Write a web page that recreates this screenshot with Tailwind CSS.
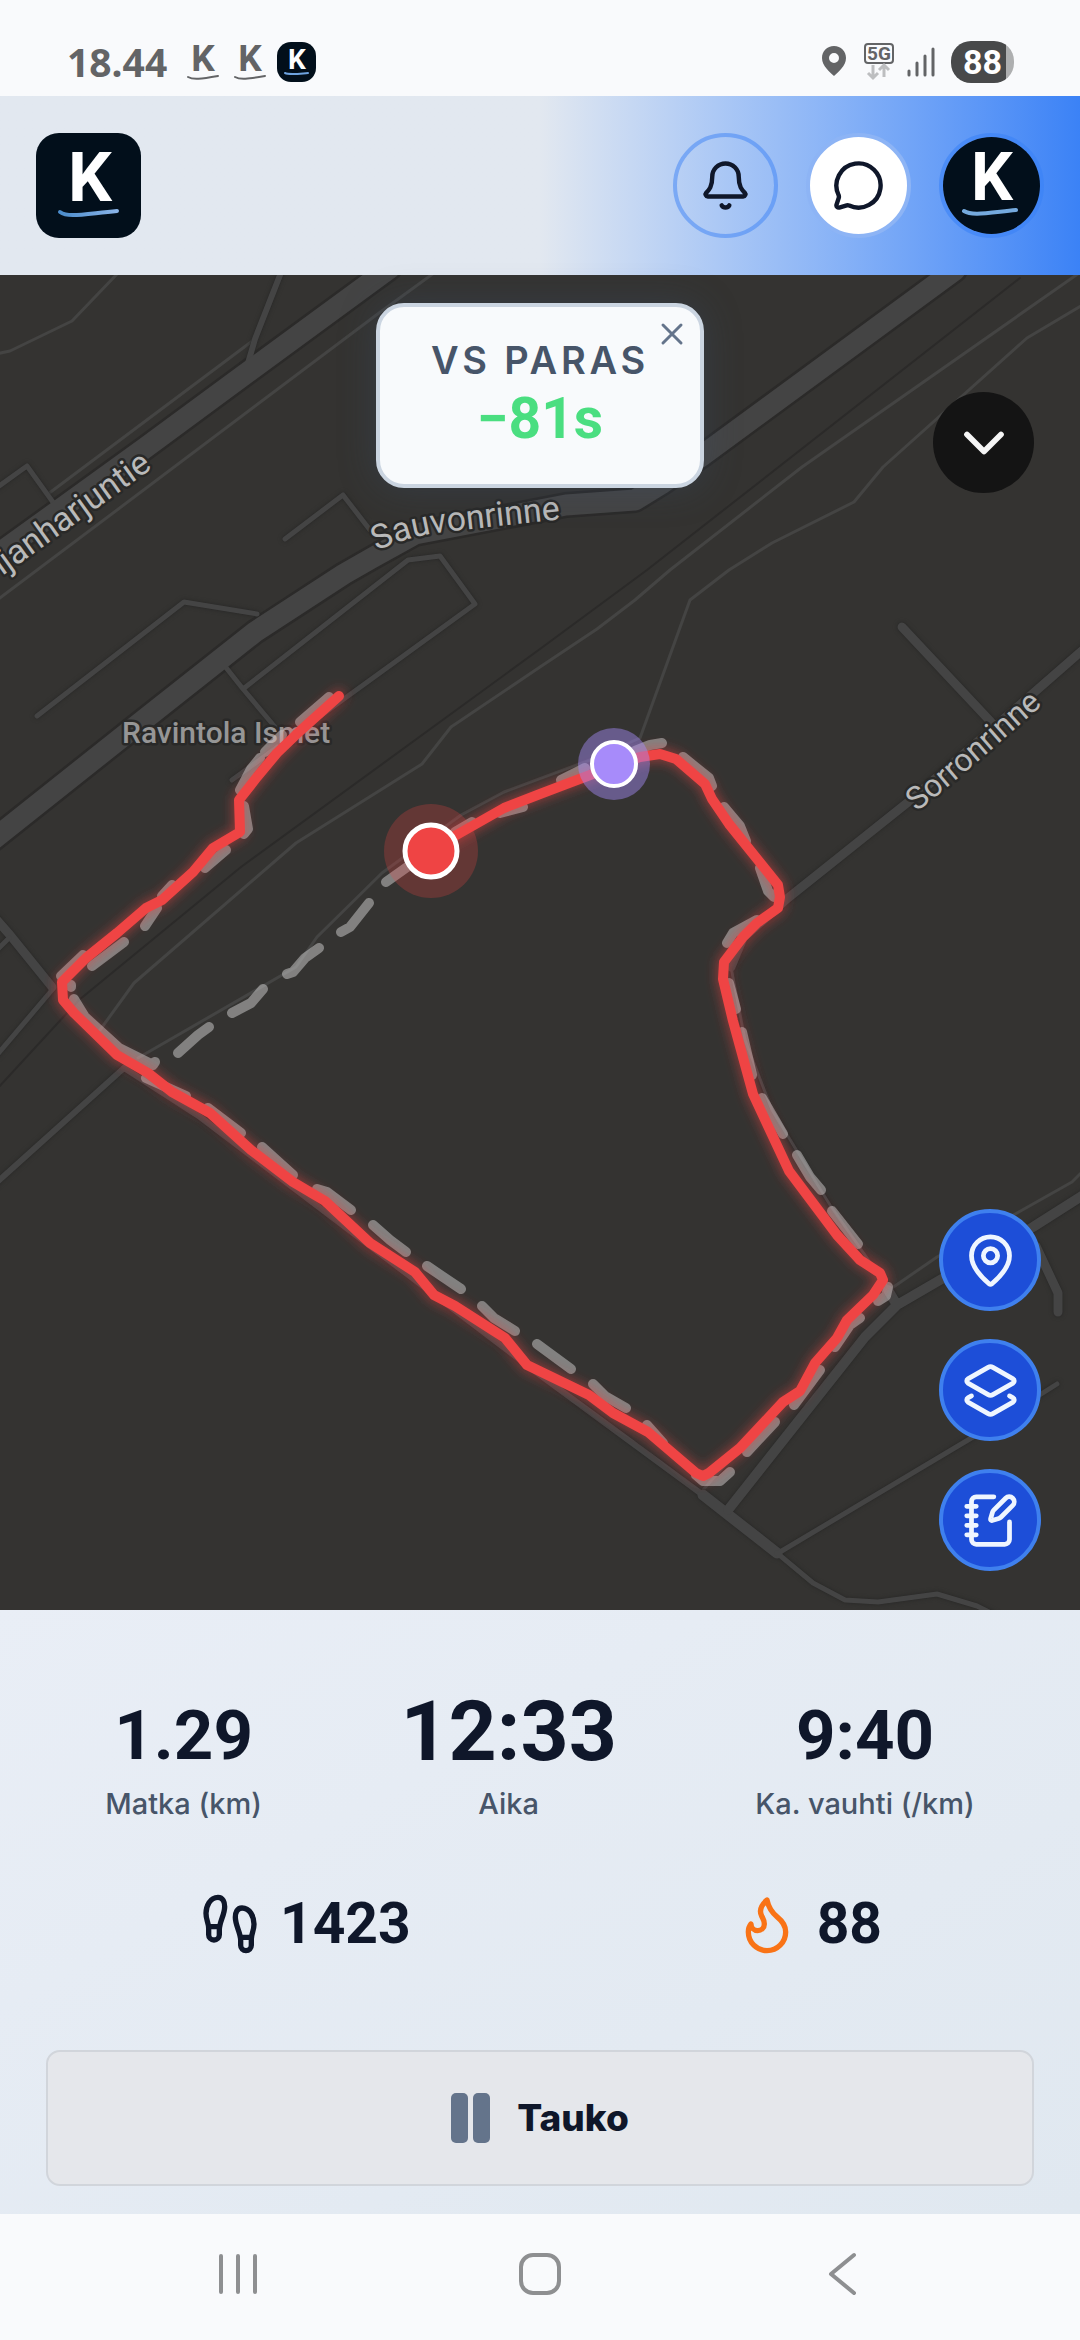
<!DOCTYPE html>
<html lang="fi">
<head>
    <meta charset="UTF-8">
    <meta name="viewport" content="width=device-width, initial-scale=1.0">
    <title>Kävely</title>
    <script src="https://cdn.jsdelivr.net/npm/@tailwindcss/browser@4"></script>
</head>
<body class="flex min-h-screen flex-col bg-[#f9fafc] font-['Inter',sans-serif] text-[#0f172a]">
    <!-- Status bar -->
    <div class="flex h-24 items-end justify-between pb-[13px] pr-[66px] pl-[67px] text-[#636466]">
        <div class="flex items-center">
            <span class="font-['Noto_Sans',sans-serif] text-[39px] leading-[42px] font-bold">18.44</span>
            <svg class="ml-5 h-[42px] w-8 overflow-visible" viewBox="0 0 32 42" aria-hidden="true">
                <text x="16" y="30" text-anchor="middle" font-family="Roboto, sans-serif" font-weight="700" font-size="37" fill="currentColor">K</text>
                <path d="M1 36C6 39 14 38 31 35" fill="none" stroke="currentColor" stroke-width="2" stroke-linecap="round"/>
            </svg>
            <svg class="ml-[15px] h-[42px] w-8 overflow-visible" viewBox="0 0 32 42" aria-hidden="true">
                <text x="16" y="30" text-anchor="middle" font-family="Roboto, sans-serif" font-weight="700" font-size="37" fill="currentColor">K</text>
                <path d="M1 36C6 39 14 38 31 35" fill="none" stroke="currentColor" stroke-width="2" stroke-linecap="round"/>
            </svg>
            <svg class="ml-[11px] size-10" viewBox="0 0 40 40" aria-hidden="true">
                <rect width="39" height="40" rx="14" fill="#020f1b"/>
                <text x="20" y="27" text-anchor="middle" font-family="Roboto, sans-serif" font-weight="700" font-size="28" fill="#fff">K</text>
                <path d="M8 31C12 33 19 32 31 31" fill="none" stroke="#6ea3e0" stroke-width="2" stroke-linecap="round"/>
            </svg>
        </div>
        <div class="flex items-center">
            <svg class="h-[42px] w-[26px]" viewBox="0 0 26 42" aria-hidden="true">
                <path fill="currentColor" fill-rule="evenodd" d="M13 5C6 5 1 10 1 17C1 25 9 31 13 35C17 31 25 25 25 17C25 10 20 5 13 5ZM13 12a5 5 0 1 1 0 10a5 5 0 0 1 0-10Z"/>
            </svg>
            <svg class="ml-4 h-[42px] w-8" viewBox="0 0 32 42" aria-hidden="true">
                <rect x="2" y="3" width="28" height="19" rx="3" fill="none" stroke="currentColor" stroke-width="2"/>
                <text x="16" y="19" text-anchor="middle" font-family="Roboto, sans-serif" font-weight="700" font-size="19" fill="currentColor">5G</text>
                <path d="M10 24v12M5 32l5 5 5-5M21 36V25M16 29l5-5 5 5" fill="none" stroke="#bdbec0" stroke-width="3"/>
            </svg>
            <svg class="ml-3 h-[42px] w-7" viewBox="0 0 28 42" aria-hidden="true">
                <path d="M2 30v4M10 22v12M18 15v19M26 8v26" stroke="currentColor" stroke-width="3" stroke-linecap="round"/>
            </svg>
            <span class="ml-4 flex h-[42px] w-[63px] items-center justify-center overflow-hidden rounded-[20px] bg-linear-to-r from-[#48494a] from-87% to-[#aeafb0] to-87% font-['Roboto',sans-serif] text-[34px] font-bold text-white">88</span>
        </div>
    </div>

    <!-- App header -->
    <header class="flex items-center justify-between bg-linear-to-r from-[#e2e8f0] from-50% to-[#3b82f6] px-9 py-[37px]">
        <a href="#" aria-label="Etusivu" class="block">
            <svg class="size-[105px]" viewBox="0 0 105 105">
                <defs>
                    <linearGradient id="swoosh"><stop stop-color="#4b8ccb"/><stop offset="1" stop-color="#8ab4e8"/></linearGradient>
                </defs>
                <rect width="105" height="105" rx="23" fill="#020f1b"/>
                <text x="54" y="68" text-anchor="middle" font-family="Roboto, sans-serif" font-weight="700" font-size="69" fill="#fff">K</text>
                <path d="M24 79C32 85 48 81 81 78" fill="none" stroke="url(#swoosh)" stroke-width="4" stroke-linecap="round"/>
            </svg>
        </a>
        <div class="flex gap-7">
            <button aria-label="Ilmoitukset" class="flex size-[105px] items-center justify-center rounded-full border-4 border-[#3b82f6]/50">
                <svg class="size-[53px]" viewBox="0 0 24 24" fill="none" stroke="currentColor" stroke-width="2" stroke-linecap="round" stroke-linejoin="round">
                    <path d="M10.268 21a2 2 0 0 0 3.464 0"/>
                    <path d="M3.262 15.326A1 1 0 0 0 4 17h16a1 1 0 0 0 .74-1.673C19.41 13.956 18 12.499 18 8A6 6 0 0 0 6 8c0 4.499-1.411 5.956-2.738 7.326"/>
                </svg>
            </button>
            <button aria-label="Viestit" class="flex size-[105px] items-center justify-center rounded-full border-4 border-[#8db4f5] bg-white">
                <svg class="size-[53px]" viewBox="0 0 24 24" fill="none" stroke="currentColor" stroke-width="2" stroke-linecap="round" stroke-linejoin="round">
                    <path d="M2.992 16.342a2 2 0 0 1 .094 1.167l-1.065 3.29a1 1 0 0 0 1.236 1.168l3.413-.998a2 2 0 0 1 1.099.092 10 10 0 1 0-4.777-4.719"/>
                </svg>
            </button>
            <button aria-label="Profiili" class="size-[105px] overflow-hidden rounded-full border-4 border-[#3b82f6]/60">
                <svg class="size-full" viewBox="0 0 97 97">
                    <rect width="97" height="97" fill="#020f1b"/>
                    <text x="49" y="63" text-anchor="middle" font-family="Roboto, sans-serif" font-weight="700" font-size="66" fill="#fff">K</text>
                    <path d="M21 74C29 79 43 76 73 73" fill="none" stroke="#75aade" stroke-width="4" stroke-linecap="round"/>
                </svg>
            </button>
        </div>
    </header>

    <!-- Map -->
    <main class="relative bg-[#343331]">
        <svg class="block w-full" viewBox="0 275 1080 1335" fill="none" stroke-linecap="round" stroke-linejoin="round" role="img" aria-label="Reittikartta">
            <defs>
                <filter id="glow" x="-10%" y="-10%" width="120%" height="120%"><feGaussianBlur stdDeviation="6"/></filter>
                <path id="track" d="M339 696L300 731L277 753L257 777L239 800L240 832L213 848L193 872L162 900L146 908L117 933L86 958L62 982L63 1000L74 1013L117 1055L148 1073L172 1092L210 1113L251 1150L293 1182L325 1201L370 1243L415 1272L434 1295L455 1306L505 1338L527 1365L589 1395L613 1413L648 1432L696 1473L703 1476L709 1473L740 1448L783 1402L800 1391L815 1363L837 1338L847 1320L873 1295L883 1280L880 1273L860 1260L837 1235L789 1171L753 1094L733 1021L723 979L724 962L743 937L757 923L778 908L780 897L778 885L729 824L712 799L705 784L676 759L660 754L640 757L614 766L561 786L540 794L504 808L430 850"/>
                <g id="lanes">
                    <path d="M282 270L255 339L244 377" stroke-width="6"/>
                    <path d="M-5 489L27 466L60 512M285 539L343 495L370 530" stroke-width="5"/>
                    <path d="M37 716L184 602L257 614M243 689L408 560L440 556L475 604L232 780M220 660L243 689L275 727" stroke-width="5"/>
                    <path d="M-5 918L10 935L52 987" stroke-width="9"/>
                    <path d="M52 990L-3 1055M9 938L-3 950" stroke-width="5"/>
                    <path d="M124 1068L-5 1184" stroke-width="6"/>
                    <path d="M124 1068L200 1117L544 1378L703 1495" stroke-width="6"/>
                    <path d="M703 1495L777 1553" stroke-width="11"/>
                    <path d="M777 1553L813 1583L845 1600L878 1602L937 1594L977 1606L995 1615M780 1552L973 1437L1057 1384" stroke-width="5"/>
                    <path d="M728 1510L865 1337L897 1305L940 1280L1033 1227L1085 1194M897 1305L888 1290" stroke-width="10"/>
                    <path d="M1036 1246L1058 1293V1312" stroke-width="9"/>
                    <path d="M1085 648L912 799L788 898L743 938L731 967" stroke-width="9"/>
                    <path d="M731 967L745 1040L772 1110L830 1205L888 1288" stroke-width="3"/>
                    <path d="M902 627L991 722" stroke-width="9"/>
                </g>
            </defs>
            <!-- footpaths -->
            <g stroke="#444443" stroke-width="3">
                <path d="M118 273L72 321L10 351L-4 354M255 339L48 494M434 273L379 313L-4 601"/>
                <path d="M1082 271L802 467L670 570L635 600L597 629L540 667L451 727L422 764L296 843L134 983L100 1030"/>
                <path d="M1084 304L1027 338L883 467L854 502L772 543L729 570L690 600L640 738L590 760L504 792L461 815L382 873L317 937L296 967L138 1058"/>
                <path d="M703 1490L725 1465M892 1288L937 1257L1017 1213L1072 1182L1084 1170"/>
            </g>
            <path d="M1020 278L647 570L540 649L241 867L79 1000L-2 1088" stroke="#2b2a29" stroke-width="2"/>
            <!-- roads: dark casing first, then fill -->
            <g stroke="#2b2a29" stroke-width="26">
                <path d="M390 268L244 375L145 448L-10 560"/>
                <path d="M-10 842L131 730L217 662L255 632L344 574L372 558L415 534L566 505L635 500L661 484L703 455L955 270"/>
            </g>
            <g stroke="#2b2a29">
                <use href="#lanes" style="filter:drop-shadow(0 0 2px #262625)"/>
            </g>
            <g stroke="#444444"><use href="#lanes"/></g>
            <g stroke="#444444" stroke-width="21">
                <path d="M390 268L244 375L145 448L-10 560"/>
                <path d="M-10 842L131 730L217 662L255 632L344 574L372 558L415 534L566 505L635 500L661 484L703 455L955 270"/>
            </g>
            <!-- place names -->
            <path id="name1" d="M-48 612L153 468"/>
            <path id="name2" d="M377 551Q405 537 443 532L590 516"/>
            <path id="name3" d="M917 812Q985 757 1062 687"/>
            <g font-family="Roboto, sans-serif" fill="#b9b9b9" stroke="#292928" stroke-width="5" paint-order="stroke">
                <text font-size="34"><textPath href="#name1" startOffset="100%" text-anchor="end">ijanharjuntie</textPath></text>
                <text font-size="34"><textPath href="#name2">Sauvonrinne</textPath></text>
                <text font-size="32"><textPath href="#name3">Sorronrinne</textPath></text>
                <text x="122" y="743" font-size="30" font-weight="500" fill="#969696">Ravintola Ismet</text>
            </g>
            <!-- best run, dashed -->
            <path stroke="#d0d0d0" stroke-opacity=".5" stroke-width="10" d="M329 697L300 722M282 735L265 752M260 758L251 769L240 790M244 806L248 829L244 834M226 850L205 868M172 885L162 896M157 908L145 926M124 942L92 966M83 955L61 976M71 985V987M74 999L85 1017L119 1048M119 1048L153 1065L155 1062M146 1078L186 1096M208 1108L241 1133M262 1147L293 1175M317 1189L327 1192L351 1210M373 1225L390 1240L406 1252M427 1266L461 1289M482 1306L494 1318L515 1331M537 1344L571 1369M593 1384L605 1396L626 1408M647 1425L663 1443M696 1475L703 1481H720L730 1472M747 1452L775 1422M794 1405L820 1370M835 1347L850 1325L860 1318M878 1301L886 1296L888 1287M858 1244L832 1211M821 1190L810 1177L797 1155M783 1134L762 1098M752 1075L742 1032M736 1009L729 983M727 943L733 933L757 920M774 897L768 891L760 868M746 841L740 826L724 807M712 786L709 778L683 757M662 743L650 745L635 751M585 768L561 780M523 807L500 813M472 822L455 832M410 865L386 882M369 903L350 927L341 932M319 948L305 958L293 972L287 974M263 989L251 1003L232 1013M209 1027L198 1035L178 1053"/>
            <use href="#track" stroke="#ef4444" stroke-opacity=".5" stroke-width="13" filter="url(#glow)"/>
            <use href="#track" stroke="#ef4444" stroke-width="10"/>
            <circle cx="614" cy="764" r="36" fill="#a78bfa" fill-opacity=".45"/>
            <circle cx="614" cy="764" r="22" fill="#a78bfa" stroke="#fff" stroke-width="4"/>
            <circle cx="431" cy="851" r="47" fill="#ef4444" fill-opacity=".25"/>
            <circle cx="431" cy="851" r="26" fill="#ef4444" stroke="#fff" stroke-width="5"/>
        </svg>

        <div class="absolute inset-x-0 top-7 mx-auto w-[328px] rounded-[28px] border-4 border-[#cbd5e1] bg-[#f8fafc] pt-[29px] pb-[32px] text-center shadow-[0_0_36px_rgba(59,80,110,0.35)]">
            <p class="text-[38px] leading-[48px] font-semibold tracking-widest text-[#475569]">VS PARAS</p>
            <p class="mt-[2px] font-['Roboto',sans-serif] text-[57px] leading-[66px] font-bold text-[#4ade80]">−81s</p>
            <button aria-label="Sulje" class="absolute top-[9px] right-[10px] text-[#64748b]">
                <svg class="size-9" viewBox="0 0 24 24" fill="none" stroke="currentColor" stroke-width="2" stroke-linecap="round"><path d="M18 6L6 18M6 6l12 12"/></svg>
            </button>
        </div>

        <button aria-label="Pienennä kartta" class="absolute top-[117px] right-[46px] flex size-[101px] items-center justify-center rounded-full bg-[#141414] text-[#f5f5f5]">
            <svg class="size-[68px]" viewBox="0 0 24 24" fill="none" stroke="currentColor" stroke-width="2" stroke-linecap="round" stroke-linejoin="round"><path d="m6 9 6 6 6-6"/></svg>
        </button>

        <div class="absolute right-[39px] bottom-[39px] flex flex-col gap-7 text-[#eff6ff]">
            <button aria-label="Sijainti" class="flex size-[102px] items-center justify-center rounded-full border-4 border-[#3f80ee] bg-[#1d4ed8]">
                <svg class="size-[57px]" viewBox="0 0 24 24" fill="none" stroke="currentColor" stroke-width="2" stroke-linecap="round" stroke-linejoin="round">
                    <path d="M20 10c0 4.993-5.539 10.193-7.399 11.799a1 1 0 0 1-1.202 0C9.539 20.193 4 14.993 4 10a8 8 0 0 1 16 0"/>
                    <circle cx="12" cy="10" r="3"/>
                </svg>
            </button>
            <button aria-label="Karttatasot" class="flex size-[102px] items-center justify-center rounded-full border-4 border-[#3f80ee] bg-[#1d4ed8]">
                <svg class="size-[57px]" viewBox="0 0 24 24" fill="none" stroke="currentColor" stroke-width="2" stroke-linecap="round" stroke-linejoin="round">
                    <path d="M13 13.74a2 2 0 0 1-2 0L2.5 8.87a1 1 0 0 1 0-1.74L11 2.26a2 2 0 0 1 2 0l8.5 4.87a1 1 0 0 1 0 1.74z"/>
                    <path d="m20 14.285 1.5.845a1 1 0 0 1 0 1.74L13 21.74a2 2 0 0 1-2 0l-8.5-4.87a1 1 0 0 1 0-1.74l1.5-.845"/>
                </svg>
            </button>
            <button aria-label="Muistiinpano" class="flex size-[102px] items-center justify-center rounded-full border-4 border-[#3f80ee] bg-[#1d4ed8]">
                <svg class="size-[57px]" viewBox="0 0 24 24" fill="none" stroke="currentColor" stroke-width="2" stroke-linecap="round" stroke-linejoin="round">
                    <path d="M13.4 2H6a2 2 0 0 0-2 2v16a2 2 0 0 0 2 2h12a2 2 0 0 0 2-2v-7.4"/>
                    <path d="M2 6h4M2 10h4M2 14h4M2 18h4"/>
                    <path d="M21.378 5.626a1 1 0 1 0-3.004-3.004l-5.01 5.012a2 2 0 0 0-.506.854l-.837 2.87a.5.5 0 0 0 .62.62l2.87-.837a2 2 0 0 0 .854-.506z"/>
                </svg>
            </button>
        </div>
    </main>

    <!-- Stats -->
    <section class="bg-linear-to-br from-[#e9eef6] to-[#e0e8f0] px-9 pt-20 pb-7">
        <div class="flex items-end justify-around text-center">
            <div>
                <p class="font-['Roboto',sans-serif] text-[69px] leading-[76px] font-bold">1.29</p>
                <p class="mt-[10px] text-[29px] leading-10 font-medium text-[#475569]">Matka (km)</p>
            </div>
            <div>
                <p class="font-['Roboto',sans-serif] text-[84px] leading-[84px] font-bold">12:33</p>
                <p class="mt-[10px] text-[29px] leading-10 font-medium text-[#475569]">Aika</p>
            </div>
            <div>
                <p class="font-['Roboto',sans-serif] text-[69px] leading-[76px] font-bold">9:40</p>
                <p class="mt-[10px] text-[29px] leading-10 font-medium text-[#475569]">Ka. vauhti (/km)</p>
            </div>
        </div>
        <div class="mt-17 flex justify-around font-['Roboto',sans-serif] text-[57px] leading-16 font-bold">
            <div class="flex items-center gap-[18px]">
                <svg class="size-16" viewBox="0 0 24 24" fill="none" stroke="currentColor" stroke-width="2" stroke-linecap="round" stroke-linejoin="round" aria-hidden="true">
                    <path d="M4 16v-2.38C4 11.5 2.97 10.5 3 8c.03-2.72 1.49-6 4.5-6C9.37 2 10 3.8 10 5.5c0 3.11-2 5.66-2 8.68V16a2 2 0 1 1-4 0Z"/>
                    <path d="M20 20v-2.38c0-2.12 1.03-3.12 1-5.62-.03-2.72-1.49-6-4.5-6C14.63 6 14 7.8 14 9.5c0 3.11 2 5.66 2 8.68V20a2 2 0 1 0 4 0Z"/>
                    <path d="M16 17h4M4 13h4"/>
                </svg>
                <span>1423</span>
            </div>
            <div class="flex items-center gap-[18px]">
                <svg class="size-16 text-[#f97316]" viewBox="0 0 24 24" fill="none" stroke="currentColor" stroke-width="2" stroke-linecap="round" stroke-linejoin="round" aria-hidden="true">
                    <path d="M8.5 14.5A2.5 2.5 0 0 0 11 12c0-1.38-.5-2-1-3-1.072-2.143-.224-4.054 2-6 .5 2.5 2 4.9 4 6.5 2 1.6 3 3.5 3 5.5a7 7 0 1 1-14 0c0-1.153.433-2.294 1-3a2.5 2.5 0 0 0 2.5 2.5z"/>
                </svg>
                <span>88</span>
            </div>
        </div>
        <div class="mt-[94px] px-[10px]">
            <button class="flex h-[136px] w-full items-center justify-center gap-[26px] rounded-[14px] border-2 border-[#d1d5db] bg-[#e5e7eb] text-[37px] font-extrabold">
                <svg class="h-[50px] w-10 text-[#64748b]" viewBox="0 0 40 50" fill="currentColor" aria-hidden="true">
                    <rect width="17" height="50" rx="5"/>
                    <rect x="22" width="17" height="50" rx="5"/>
                </svg>
                Tauko
            </button>
        </div>
    </section>

    <!-- System navigation -->
    <nav class="flex h-[126px] items-start justify-around px-[87px] pt-[38px] text-[#8e8f91]">
        <button aria-label="Viimeisimmät"><svg class="size-[44px]" viewBox="0 0 44 44" fill="none" stroke="currentColor" stroke-width="4" stroke-linecap="round"><path d="M5 4v36M22 4v36M39 4v36"/></svg></button>
        <button aria-label="Koti"><svg class="size-[44px]" viewBox="0 0 44 44" fill="none" stroke="currentColor" stroke-width="4"><rect x="3" y="3" width="38" height="38" rx="12"/></svg></button>
        <button aria-label="Takaisin"><svg class="size-[44px]" viewBox="0 0 44 44" fill="none" stroke="currentColor" stroke-width="4" stroke-linecap="round" stroke-linejoin="round"><path d="M34 3L11 22L34 41"/></svg></button>
    </nav>
</body>
</html>
